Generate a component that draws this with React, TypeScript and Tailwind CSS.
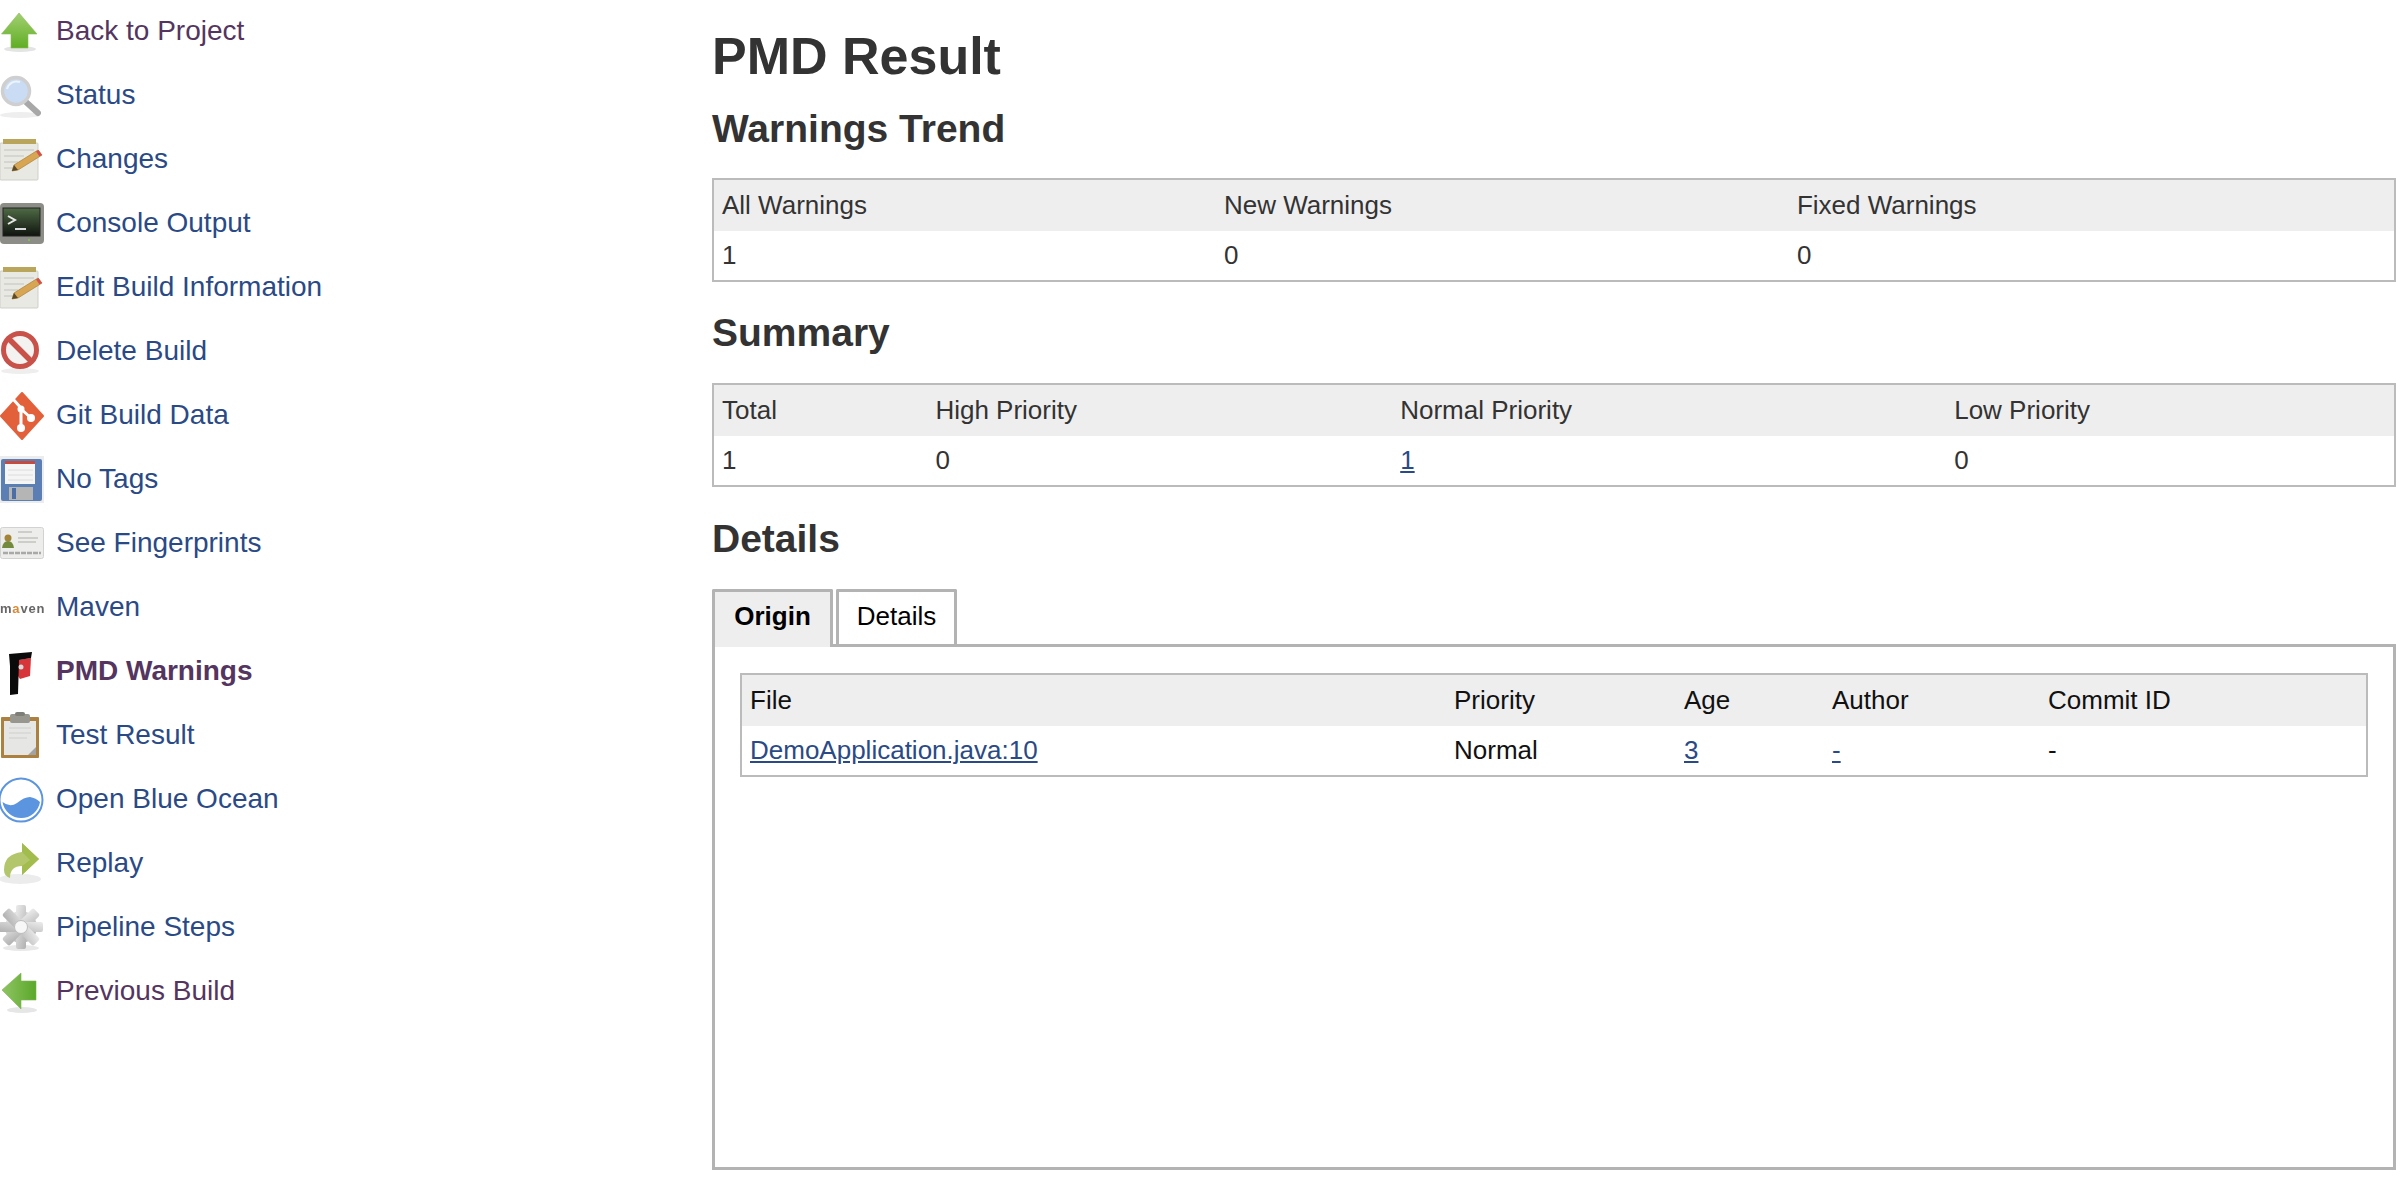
import type { ReactNode } from "react";

const ArrowUp = () => (
  <svg viewBox="0 0 44 44" className="h-11 w-11">
    <defs>
      <linearGradient id="up" x1="0" y1="0" x2="0" y2="1">
        <stop offset="0" stopColor="#a3cf72" />
        <stop offset="1" stopColor="#5fae24" />
      </linearGradient>
    </defs>
    <ellipse cx="20" cy="39" rx="16" ry="3" fill="#e4e4e4" />
    <path d="M19 3 L37 24 L28 24 L28 38 L11 38 L11 24 L1.500 24 Z" fill="url(#up)" stroke="#8abc58" strokeWidth="0.6" />
  </svg>
);

const Magnifier = () => (
  <svg viewBox="0 0 44 44" className="h-11 w-11">
    <ellipse cx="20" cy="41" rx="20" ry="3" fill="#eee" />
    <path d="M26 28 L38 39" stroke="#a8a8a8" strokeWidth="6" strokeLinecap="round" />
    <circle cx="16" cy="17" r="13.500" fill="#c9dcf3" stroke="#cfcfcf" strokeWidth="3.500" />
    <path d="M7 15 A10 10 0 0 1 20 8" fill="none" stroke="#ecf3fb" strokeWidth="2" />
  </svg>
);

const Notepad = () => (
  <svg viewBox="0 0 44 44" className="h-11 w-11">
    <rect x="0" y="5" width="38" height="37" rx="1" fill="#e9e9e3" stroke="#cfcfc9" />
    <rect x="3" y="1" width="33" height="5" fill="#b9a65c" />
    <path d="M4 12h30M4 18h20M4 24h14M4 30h10" stroke="#d0d0cc" strokeWidth="1.500" />
    <path d="M12 33 L14 27 L38 12 L42 17 L18 32 Z" fill="#d8a552" stroke="#a97f3a" strokeWidth="0.7" />
    <path d="M36 13.500 L38.500 12 L42 17 L39.500 18.500 Z" fill="#d65050" />
    <path d="M12 33 L14 27 L18 32 Z" fill="#5c4a2a" />
  </svg>
);

const Terminal = () => (
  <svg viewBox="0 0 44 44" className="h-11 w-11">
    <rect x="0" y="1" width="44" height="41" rx="4" fill="#8d8d88" />
    <defs>
      <linearGradient id="term" x1="0" y1="0" x2="0" y2="1">
        <stop offset="0" stopColor="#4f6a45" />
        <stop offset="1" stopColor="#0f140e" />
      </linearGradient>
    </defs>
    <rect x="3" y="6" width="37" height="28" fill="url(#term)" stroke="#222" />
    <path d="M8 14 L15 18 L8 22" fill="none" stroke="#e8e8e8" strokeWidth="2" />
    <path d="M15 27h11" stroke="#d8d8d8" strokeWidth="2" />
    <circle cx="29" cy="38" r="1" fill="#7ec850" />
  </svg>
);

const NoEntry = () => (
  <svg viewBox="0 0 44 44" className="h-11 w-11">
    <ellipse cx="20" cy="41" rx="19" ry="3" fill="#eee" />
    <circle cx="20" cy="20" r="16.500" fill="#f4f2f0" stroke="#c8524a" strokeWidth="5" />
    <path d="M9 9 L31 31" stroke="#c8524a" strokeWidth="5.500" />
  </svg>
);

const GitLogo = () => (
  <svg viewBox="0 0 44 48" className="h-12 w-11">
    <path d="M22 1 L43 24 L22 47 L1 24 Z" fill="#e2603a" strokeLinejoin="round" stroke="#e2603a" strokeWidth="2" />
    <path d="M13 7 L21 16 L21 36 M21 17 L31 26" fill="none" stroke="#fff" strokeWidth="3" />
    <circle cx="21" cy="17" r="3.500" fill="#fff" />
    <circle cx="21" cy="36" r="4" fill="#fff" />
    <circle cx="31" cy="26" r="4" fill="#fff" />
  </svg>
);

const Floppy = () => (
  <svg viewBox="0 0 44 48" className="h-12 w-11">
    <rect x="0" y="0" width="44" height="47" fill="#ececec" />
    <rect x="1" y="3" width="41" height="42" rx="2" fill="#5b7fb5" />
    <rect x="5" y="5" width="30" height="23" fill="#f5f5f5" />
    <rect x="5" y="5" width="30" height="3" fill="#c84a3c" />
    <path d="M8 14h25M8 19h25M8 24h25" stroke="#dcdcdc" />
    <rect x="9" y="31" width="24" height="13" fill="#b5b5b5" />
    <rect x="12" y="32" width="4" height="11" fill="#4a6ea5" />
  </svg>
);

const Card = () => (
  <svg viewBox="0 0 44 34" className="h-[34px] w-11">
    <rect x="0.500" y="0.500" width="43" height="31" rx="2" fill="#ededeb" stroke="#d2d2d0" />
    <circle cx="8" cy="11" r="3.500" fill="#a38538" />
    <path d="M2 21 Q3 14 8 14 Q13 14 14 21 Z" fill="#738a3d" />
    <path d="M18 5h14M18 11h20M18 15h18" stroke="#c2c2c0" strokeWidth="1.500" />
    <path d="M3 26h38" stroke="#a9a9a7" strokeWidth="2.500" strokeDasharray="5 1" />
  </svg>
);

const MavenMark = () => (
  <span className="text-[13px] leading-none font-bold tracking-[0.8px] text-[#666]">
    m<span className="text-[#d88a3a]">a</span>ven
  </span>
);

const PmdLogo = () => (
  <svg viewBox="0 0 44 48" className="h-12 w-11">
    <path d="M18 12 L31 10 L30 28 L20 31 L18 28 Z" fill="#d8353a" />
    <path d="M9 6 L32 4 L31 10 L19 12 L18 46 L10 47 L10 18 Z" fill="#0a0a0a" />
    <circle cx="21" cy="19" r="2.500" fill="#d9d9d9" />
  </svg>
);

const Clipboard = () => (
  <svg viewBox="0 0 44 48" className="h-12 w-11">
    <rect x="1" y="5" width="38" height="41" rx="1" fill="#ac8140" />
    <rect x="4" y="9" width="32" height="34" fill="#e6e6e4" />
    <path d="M28 43 L36 35 L36 43 Z" fill="#a3a3a3" />
    <path d="M9 16h22M9 21h22M9 26h18" stroke="#d6d6d4" strokeWidth="1.500" />
    <rect x="10" y="2" width="20" height="9" rx="2" fill="#97978f" />
    <rect x="15" y="0" width="10" height="4" rx="2" fill="#7e7e78" />
  </svg>
);

const BlueOcean = () => (
  <svg viewBox="0 0 44 48" className="h-12 w-11">
    <circle cx="21" cy="24" r="21.500" fill="#fff" stroke="#5b95df" strokeWidth="2" />
    <path d="M2.500 26 Q10 32 17 27 Q24 21 30 21 Q36 22 40 26 A19 19 0 0 1 2.500 26 Z" fill="#5b95df" />
  </svg>
);

const Replay = () => (
  <svg viewBox="0 0 44 44" className="h-11 w-11">
    <ellipse cx="20" cy="37" rx="21" ry="5" fill="#ececec" />
    <path d="M39 17 L22 1 L22 10 Q4 12 4 28 Q4 34 10 36 Q10 24 22 24 L22 33 Z" fill="#b3c66c" />
    <path d="M39 17 L22 1 L22 10 L30 18 L22 24 L22 33 Z" fill="#a2bd4e" />
  </svg>
);

const Gear = () => (
  <svg viewBox="0 0 44 48" className="h-12 w-11">
    <defs>
      <linearGradient id="gear" x1="0" y1="0" x2="1" y2="1">
        <stop offset="0" stopColor="#ececec" />
        <stop offset="1" stopColor="#b0b0b0" />
      </linearGradient>
    </defs>
    <ellipse cx="21" cy="44" rx="18" ry="3" fill="#e8e8e8" />
    <g fill="url(#gear)">
      <circle cx="21" cy="23" r="16" />
      <rect x="16" y="1" width="10" height="44" rx="2" />
      <rect x="16" y="1" width="10" height="44" rx="2" transform="rotate(45 21 23)" />
      <rect x="16" y="1" width="10" height="44" rx="2" transform="rotate(90 21 23)" />
      <rect x="16" y="1" width="10" height="44" rx="2" transform="rotate(135 21 23)" />
    </g>
    <circle cx="21" cy="23" r="6.500" fill="#f7f7f7" stroke="#bdbdbd" />
  </svg>
);

const ArrowLeft = () => (
  <svg viewBox="0 0 44 44" className="h-11 w-11">
    <defs>
      <linearGradient id="left" x1="0" y1="0" x2="1" y2="0">
        <stop offset="0" stopColor="#8fc463" />
        <stop offset="1" stopColor="#5aa82a" />
      </linearGradient>
    </defs>
    <ellipse cx="22" cy="40" rx="15" ry="3" fill="#e6e6e6" />
    <path d="M2 20 L21 3 L21 11 L36 11 L36 30 L21 30 L21 39 Z" fill="url(#left)" stroke="#7eb353" strokeWidth="0.6" />
  </svg>
);

const NAV: { label: string; icon: ReactNode; visited?: boolean; current?: boolean }[] = [
  { label: "Back to Project", icon: <ArrowUp />, visited: true },
  { label: "Status", icon: <Magnifier /> },
  { label: "Changes", icon: <Notepad /> },
  { label: "Console Output", icon: <Terminal /> },
  { label: "Edit Build Information", icon: <Notepad /> },
  { label: "Delete Build", icon: <NoEntry /> },
  { label: "Git Build Data", icon: <GitLogo /> },
  { label: "No Tags", icon: <Floppy /> },
  { label: "See Fingerprints", icon: <Card /> },
  { label: "Maven", icon: <MavenMark /> },
  { label: "PMD Warnings", icon: <PmdLogo />, visited: true, current: true },
  { label: "Test Result", icon: <Clipboard /> },
  { label: "Open Blue Ocean", icon: <BlueOcean /> },
  { label: "Replay", icon: <Replay /> },
  { label: "Pipeline Steps", icon: <Gear /> },
  { label: "Previous Build", icon: <ArrowLeft />, visited: true },
];

function Sidebar() {
  return (
    <nav className="w-[712px] shrink-0">
      {NAV.map((n) => (
        <a key={n.label} href="#" className="flex h-16 items-center">
          <span className="flex w-[56px] shrink-0 items-center blur-[0.5px]">{n.icon}</span>
          <span
            className={`-mt-[2px] text-[28px] leading-none ${n.visited ? "text-[#54355f]" : "text-[#2a4a86]"} ${n.current ? "font-bold" : ""}`}
          >
            {n.label}
          </span>
        </a>
      ))}
    </nav>
  );
}

type Cell = { text: string; link?: boolean };

function ResultTable({
  widths,
  head,
  row,
  dark,
}: {
  widths: string[];
  head: string[];
  row: Cell[];
  dark?: boolean;
}) {
  return (
    <table className={`w-full table-fixed border-2 border-[#bbbbbb] text-[26px] ${dark ? "text-[#111]" : "text-[#333]"}`}>
      <colgroup>
        {widths.map((w) => (
          <col key={w} style={{ width: w }} />
        ))}
      </colgroup>
      <thead>
        <tr className="h-[52px] bg-[#eeeeee]">
          {head.map((h) => (
            <th key={h} className="px-[8px] text-left font-normal">
              {h}
            </th>
          ))}
        </tr>
      </thead>
      <tbody>
        <tr className="h-[50px]">
          {row.map((c, i) => (
            <td key={i} className="px-[8px]">
              {c.link ? (
                <a href="#" className="text-[#2a4a86] underline">
                  {c.text}
                </a>
              ) : (
                c.text
              )}
            </td>
          ))}
        </tr>
      </tbody>
    </table>
  );
}

function Main() {
  return (
    <main className="mr-[17px] flex-1 text-[#333]">
      <h1 className="mt-[28px] h-[57px] text-[52px] leading-[57px] font-bold">PMD Result</h1>
      <h2 className="mt-[22px] h-[44px] text-[39px] leading-[44px] font-bold">Warnings Trend</h2>
      <div className="mt-[27px]">
        <ResultTable
          widths={["502px", "572px", "605px"]}
          head={["All Warnings", "New Warnings", "Fixed Warnings"]}
          row={[{ text: "1" }, { text: "0" }, { text: "0" }]}
        />
      </div>
      <h2 className="mt-[29px] h-[44px] text-[39px] leading-[44px] font-bold">Summary</h2>
      <div className="mt-[28px]">
        <ResultTable
          widths={["214px", "464px", "553px", "448px"]}
          head={["Total", "High Priority", "Normal Priority", "Low Priority"]}
          row={[{ text: "1" }, { text: "0" }, { text: "1", link: true }, { text: "0" }]}
        />
      </div>
      <h2 className="mt-[30px] h-[44px] text-[39px] leading-[44px] font-bold">Details</h2>
      <div className="mt-[28px] flex items-end gap-[3px] text-[26px] text-black">
        <div className="relative z-10 -mb-[3px] flex h-[58px] w-[121px] items-center justify-center rounded-t-[2px] border-3 border-b-0 border-[#b3b3b3] bg-[#eeeeee] pb-[7px] font-bold">
          Origin
        </div>
        <div className="flex h-[55px] w-[121px] items-center justify-center rounded-t-[2px] border-3 border-b-0 border-[#b3b3b3] bg-white pb-[4px]">
          Details
        </div>
      </div>
      <div className="h-[526px] border-3 border-[#b3b3b3] pt-[26px] pr-[25px] pl-[25px]">
        <ResultTable
          dark
          widths={["705px", "230px", "148px", "216px", "327px"]}
          head={["File", "Priority", "Age", "Author", "Commit ID"]}
          row={[
            { text: "DemoApplication.java:10", link: true },
            { text: "Normal" },
            { text: "3", link: true },
            { text: "-", link: true },
            { text: "-" },
          ]}
        />
      </div>
    </main>
  );
}

export default function App() {
  return (
    <div className="flex h-[1182px] overflow-hidden bg-white font-['Liberation_Sans',Arial,sans-serif]">
      <Sidebar />
      <Main />
    </div>
  );
}
